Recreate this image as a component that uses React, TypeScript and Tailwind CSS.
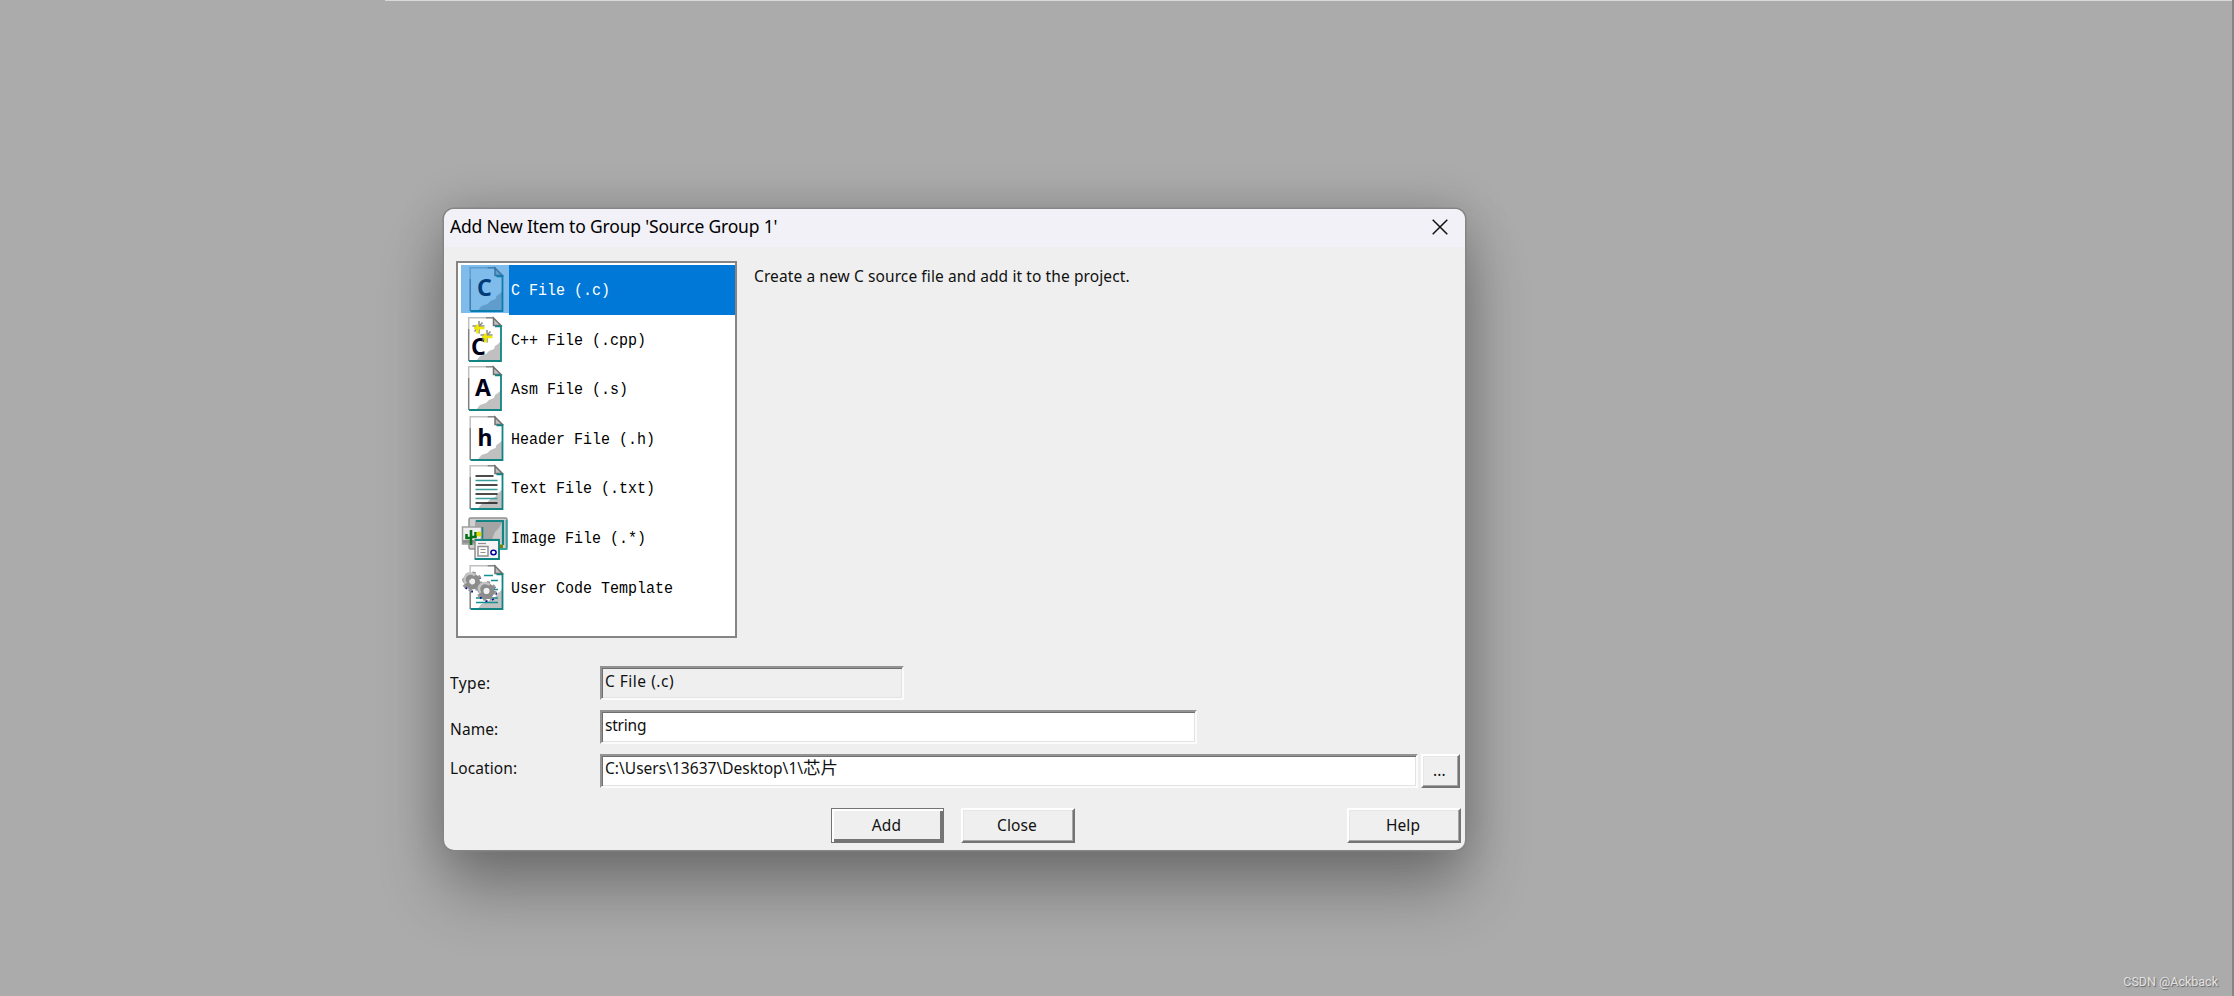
import { useState } from 'react';
import type { ReactNode } from 'react';

type FileItem = {
  label: string;
  icon: ReactNode;
};

// 纸张底图，x 为左边缘
const Page = ({ x = 8.5 }: { x?: number }) => (
  <g transform={`translate(${x} 2)`}>
    <path d="M.7.7H25L33 9V43.5H.7z" fill="#fff" />
    <path d="M33 24l-3 3-3 2-1 3-5 2-3 3-6 2-4 5h25z" fill="#c0c0c0" />
    <path d="M.7 44V12" stroke="#808080" strokeWidth="1.5" fill="none" />
    <path d="M.7 12V.8H18" stroke="#c0c0c0" strokeWidth="1.5" fill="none" />
    <path d="M18 .8h8" stroke="#808080" strokeWidth="1.5" />
    <path d="M25.500 1v7.500H33z" fill="#c0c0c0" stroke="#707070" strokeWidth="1.500" />
    <path d="M27 9.300h6V44H1" stroke="#128484" strokeWidth="1.800" fill="none" />
  </g>
);

const Letter = ({ x, y, children }: { x: number; y: number; children: string }) => (
  <text x={x} y={y} fontSize={23} textAnchor="middle" className="font-['Noto_Sans','Liberation_Sans',sans-serif] font-bold" fill="#000018">
    {children}
  </text>
);

const Star = ({ x, y }: { x: number; y: number }) => (
  <g transform={`translate(${x} ${y})`}>
    <path d="M.5-6.500V6M-6-1.500H6M-4 4l8-9" stroke="#8c8c80" strokeWidth="1.500" />
    <path d="M-1-3V6M-4.500 .5H6" stroke="#f0e800" strokeWidth="2.600" />
  </g>
);

const Gear = ({ x, y }: { x: number; y: number }) => (
  <g transform={`translate(${x} ${y})`}>
    <circle r="8.500" fill="none" stroke="#000090" strokeWidth="2" strokeDasharray="2 4.675" transform="translate(1 1.500)" />
    <circle r="8.500" fill="none" stroke="#989898" strokeWidth="3" strokeDasharray="3.300 3.375" />
    <circle r="5.500" fill="none" stroke="#8c8c8c" strokeWidth="5" />
    <path d="M-6 2A6 6 0 0 1 3-6" stroke="#c4c4c4" strokeWidth="2.500" fill="none" />
    <circle r="2.500" fill="#f0f0f0" />
  </g>
);

const items: FileItem[] = [
  {
    label: 'C File (.c)',
    icon: <><Page /><Letter x={23.5} y={31}>C</Letter></>
  },
  {
    label: 'C++ File (.cpp)',
    icon: <><Page x={7} /><Letter x={17.5} y={40}>C</Letter><Star x={17.5} y={12.5} /><Star x={25.5} y={21.5} /></>
  },
  {
    label: 'Asm File (.s)',
    icon: <><Page x={7} /><Letter x={22} y={31.5}>A</Letter></>
  },
  {
    label: 'Header File (.h)',
    icon: <><Page /><Letter x={24} y={31.5}>h</Letter></>
  },
  {
    label: 'Text File (.txt)',
    icon: (
      <>
        <Page />
        <path d="M14.500 13h18M14.500 22h22M14.500 31h22M14.500 40h22" stroke="#101010" strokeWidth="1.600" />
        <path d="M14.500 17.500h22M14.500 26.500h22M14.500 35.500h22" stroke="#3a9d9d" strokeWidth="1.600" />
      </>
    )
  },
  {
    label: 'Image File (.*)',
    icon: (
      <>
        <rect x="8" y="5" width="38" height="31" rx="1.500" fill="#d0d0d0" stroke="#909090" strokeWidth="1.500" />
        <path d="M45.500 7v29H38" stroke="#30a0a0" strokeWidth="1.800" fill="none" />
        <rect x="14" y="7.500" width="28" height="22" fill="#a4a4a4" />
        <path d="M41 9l-3 6-4 4-3 7-5 4h15z" fill="#c8c8c8" />
        <path d="M15 8h27v24" stroke="#128484" strokeWidth="2.200" fill="none" />
        <rect x="1.500" y="14" width="19" height="17" fill="#eee" stroke="#a0a0a0" strokeWidth="1.500" />
        <path d="M2 27h20v3.500H2z" fill="#909090" />
        <path d="M10 17v15M5.500 21v4H10M14.500 19v5H10" stroke="#087018" strokeWidth="2.600" fill="none" />
        <circle cx="18" cy="21" r="2.600" fill="#ded600" />
        <path d="M21.500 14v12" stroke="#128484" strokeWidth="1.500" />
        <path d="M39 31.500h3V35h-3z" fill="#808000" />
        <rect x="14" y="26.500" width="24" height="19.500" fill="#f4f4f4" stroke="#909090" strokeWidth="1.500" />
        <path d="M14 27h24v19H14" stroke="#128484" strokeWidth="1.800" fill="none" />
        <path d="M17 30.500h8" stroke="#909090" strokeWidth="1.200" />
        <rect x="17" y="33.500" width="10" height="9.500" fill="#fff" stroke="#909090" strokeWidth="1.500" />
        <path d="M19.500 36.500h5M19.500 39.500h5" stroke="#909090" strokeWidth="1.200" />
        <ellipse cx="32.500" cy="39.500" rx="2.600" ry="2.200" fill="#fff" stroke="#0000a0" strokeWidth="1.500" />
      </>
    )
  },
  {
    label: 'User Code Template',
    icon: (
      <>
        <Page />
        <path d="M23 12.500h9M30 17.500h7M31 26.500h6M15 35h22M15 39.500h22" stroke="#159090" strokeWidth="1.700" />
        <Gear x={11} y={18.5} />
        <Gear x={25.5} y={28} />
      </>
    )
  }
];

const Button = ({ className, primary, children }: { className: string; primary?: boolean; children: ReactNode }) => (
  <button
    type="button"
    className={`flex shrink-0 items-center justify-center bg-[#efefef] pr-[2px] ${
      primary
        ? 'border-[1.5px] border-[#747474] shadow-[inset_2px_2px_0_#fff,inset_-3px_-3px_0_#747474]'
        : 'border-2 border-t-white border-l-white border-r-[#747474] border-b-[#747474] shadow-[inset_-1px_-1px_0_#a5a5a5,inset_1px_1px_0_#e6e6e6]'
    } ${className}`}
  >
    {children}
  </button>
);

const fieldClass =
  'h-[34px] shrink-0 border-2 border-t-[#939393] border-l-[#939393] border-r-[#fbfbfb] border-b-[#fbfbfb] pl-[3px] text-[#111] outline-none shadow-[inset_1px_1px_0_#707070,inset_-1px_-1px_0_#e3e3e3]';

export default function App() {
  const [selected, setSelected] = useState(0);
  const [name, setName] = useState('string');

  return (
    <div className="flex h-[996px] w-[2234px] flex-col overflow-hidden border-r-2 border-[#858585] bg-[#ababab]">
      <div className="ml-[385px] h-px shrink-0 bg-[#d8d8d8]" />

      <div className="mt-[208px] ml-[444px] flex h-[641px] w-[1021px] shrink-0 flex-col overflow-hidden rounded-[10px] bg-[#efefef] font-['Noto_Sans','Noto_Sans_CJK_SC',sans-serif] text-[15.5px] tracking-[0.1px] text-[#111] shadow-[0_0_0_1.5px_#858585,0_0_48px_rgba(0,0,0,0.18),0_40px_64px_rgba(0,0,0,0.3)]">
        {/* 标题栏 */}
        <div className="flex h-[38px] shrink-0 items-center justify-between bg-[#f2f1f8] pr-[17px] pl-[6px]">
          <span className="pb-[3px] text-[17.5px] leading-[35px] tracking-[-0.18px] whitespace-nowrap text-black">
            Add New Item to Group 'Source Group 1'
          </span>
          <svg width="16" height="16" viewBox="0 0 16 16" className="mb-0.5">
            <path d="M.7.7l14.600 14.600M15.300.7L.7 15.300" stroke="#111" strokeWidth="1.500" />
          </svg>
        </div>

        {/* 文件类型列表 */}
        <div className="flex shrink-0 pt-[14px] pl-[12px]">
          <div className="h-[377px] w-[281px] border-2 border-[#858585] bg-white pt-[2px] pl-[3px]">
            {items.map((item, index) => (
              <div
                key={item.label}
                onClick={() => setSelected(index)}
                className="flex h-[49.6px] cursor-default"
              >
                <div className="relative h-[48px] w-[48px] shrink-0">
                  <svg width="48" height="48" viewBox="0 0 48 48">{item.icon}</svg>
                  {selected === index && <div className="absolute inset-0 bg-[#0078d7]/50" />}
                </div>
                <div
                  className={`flex-1 pl-[2px] font-['Liberation_Mono',monospace] text-[15px] leading-[52px] tracking-normal whitespace-pre ${
                    selected === index ? 'bg-[#0078d7] text-white' : 'text-black'
                  }`}
                >
                  <span className="inline-block h-[49.6px] scale-y-115">{item.label}</span>
                </div>
              </div>
            ))}
          </div>
          <p className="ml-[17px] pt-[4px] leading-[22px] whitespace-nowrap">
            Create a new C source file and add it to the project.
          </p>
        </div>

        {/* 表单 */}
        <div className="mt-[28px] flex flex-col gap-[10px] pl-[6px]">
          <div className="flex">
            <label className="w-[150px] pt-[6px] leading-[22px] tracking-[0.4px]">Type:</label>
            <div className={`w-[304px] bg-[#efefef] leading-[26px] tracking-[0.5px] ${fieldClass}`}>C File (.c)</div>
          </div>
          <div className="flex">
            <label className="w-[150px] pt-[8px] leading-[22px]">Name:</label>
            <input value={name} onChange={e => setName(e.target.value)} className={`w-[597px] bg-white pb-[4px] tracking-[-0.2px] ${fieldClass}`} />
          </div>
          <div className="flex">
            <label className="w-[150px] pt-[3px] leading-[22px]">Location:</label>
            <div className={`w-[818px] bg-white leading-[25px] tracking-[0.02px] whitespace-nowrap ${fieldClass}`}>
              {'C:\\Users\\13637\\Desktop\\1\\'}
              <span className="text-[17.5px] leading-none">芯片</span>
            </div>
            <Button className="ml-[3px] h-[34px] w-[39px]">...</Button>
          </div>
        </div>

        {/* 底部按钮 */}
        <div className="mt-[20px] flex pl-[387px]">
          <Button primary className="h-[35px] w-[113px]">Add</Button>
          <Button className="ml-[17px] h-[35px] w-[114px]">Close</Button>
          <Button className="ml-[272px] h-[35px] w-[114px]">Help</Button>
        </div>
      </div>

      <div className="mt-auto flex justify-end pr-[14px] pb-[4px] font-['Roboto','Liberation_Sans',sans-serif] text-[12.5px] leading-[20px] text-[#e2e2e2] [text-shadow:1px_1px_1px_#666]">
        CSDN @Ackback
      </div>
    </div>
  );
}
